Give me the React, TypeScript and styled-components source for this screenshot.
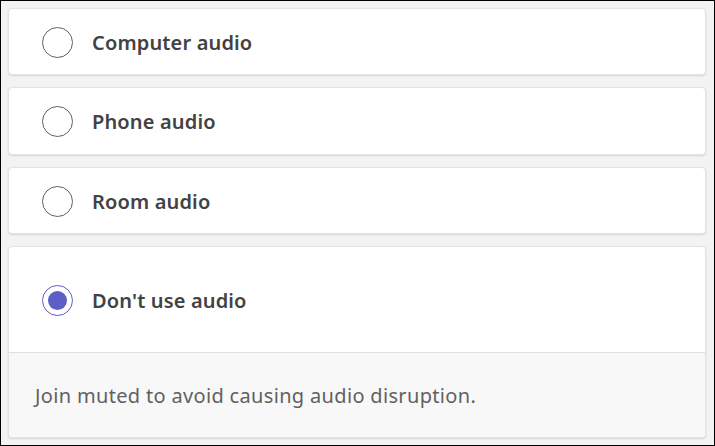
import React, { useState } from "react";
import styled, { createGlobalStyle } from "styled-components";

const GlobalStyle = createGlobalStyle`
  html, body {
    margin: 0;
    padding: 0;
    background: #f3f3f3;
  }
  * {
    box-sizing: border-box;
  }
`;

const Frame = styled.div`
  width: 715px;
  height: 446px;
  border: 1px solid #000;
  background: #f3f3f3;
  padding: 7px 8px 7px 7px;
  display: flex;
  flex-direction: column;
  gap: 12px;
  font-family: "Noto Sans", "Open Sans", sans-serif;
`;

const Card = styled.div<{ $height: number }>`
  height: ${(p) => p.$height}px;
  background: #fff;
  border: 1px solid #e3e3e3;
  border-radius: 4px;
  box-shadow: 0 1px 2px rgba(0, 0, 0, 0.12);
  display: flex;
  flex-direction: column;
  overflow: hidden;
`;

const Option = styled.label`
  flex: 1;
  display: flex;
  align-items: center;
  gap: 19px;
  padding-left: 33px;
  padding-top: 1px;
  cursor: pointer;
`;

const Radio = styled.span<{ $checked: boolean }>`
  width: 31px;
  height: 31px;
  border-radius: 50%;
  border: 1px solid ${(p) => (p.$checked ? "#5b5fc7" : "#616161")};
  display: flex;
  align-items: center;
  justify-content: center;
  flex-shrink: 0;

  &::after {
    content: "";
    width: 19px;
    height: 19px;
    border-radius: 50%;
    background: #5b5fc7;
    display: ${(p) => (p.$checked ? "block" : "none")};
  }
`;

const Label = styled.span`
  font-size: 20px;
  font-weight: 600;
  color: #424242;
  letter-spacing: 0.15px;
`;

const Footer = styled.div`
  height: 85px;
  background: #f8f8f8;
  border-top: 1px solid #e0e0e0;
  display: flex;
  align-items: center;
  padding-left: 26px;
  font-size: 20px;
  color: #616161;
  letter-spacing: 0.33px;
`;

const options = [
  { id: "computer", label: "Computer audio", height: 67 },
  { id: "phone", label: "Phone audio", height: 68 },
  { id: "room", label: "Room audio", height: 67 },
  { id: "none", label: "Don't use audio", height: 192 },
];

const App = () => {
  const [selected, setSelected] = useState<string>("none");

  return (
    <>
      <GlobalStyle />
      <Frame>
        {options.map((opt) => (
          <Card key={opt.id} $height={opt.height}>
            <Option onClick={() => setSelected(opt.id)}>
              <Radio $checked={selected === opt.id} />
              <Label>{opt.label}</Label>
            </Option>
            {opt.id === "none" && selected === "none" ? (
              <Footer>Join muted to avoid causing audio disruption.</Footer>
            ) : null}
          </Card>
        ))}
      </Frame>
    </>
  );
};

export default App;
